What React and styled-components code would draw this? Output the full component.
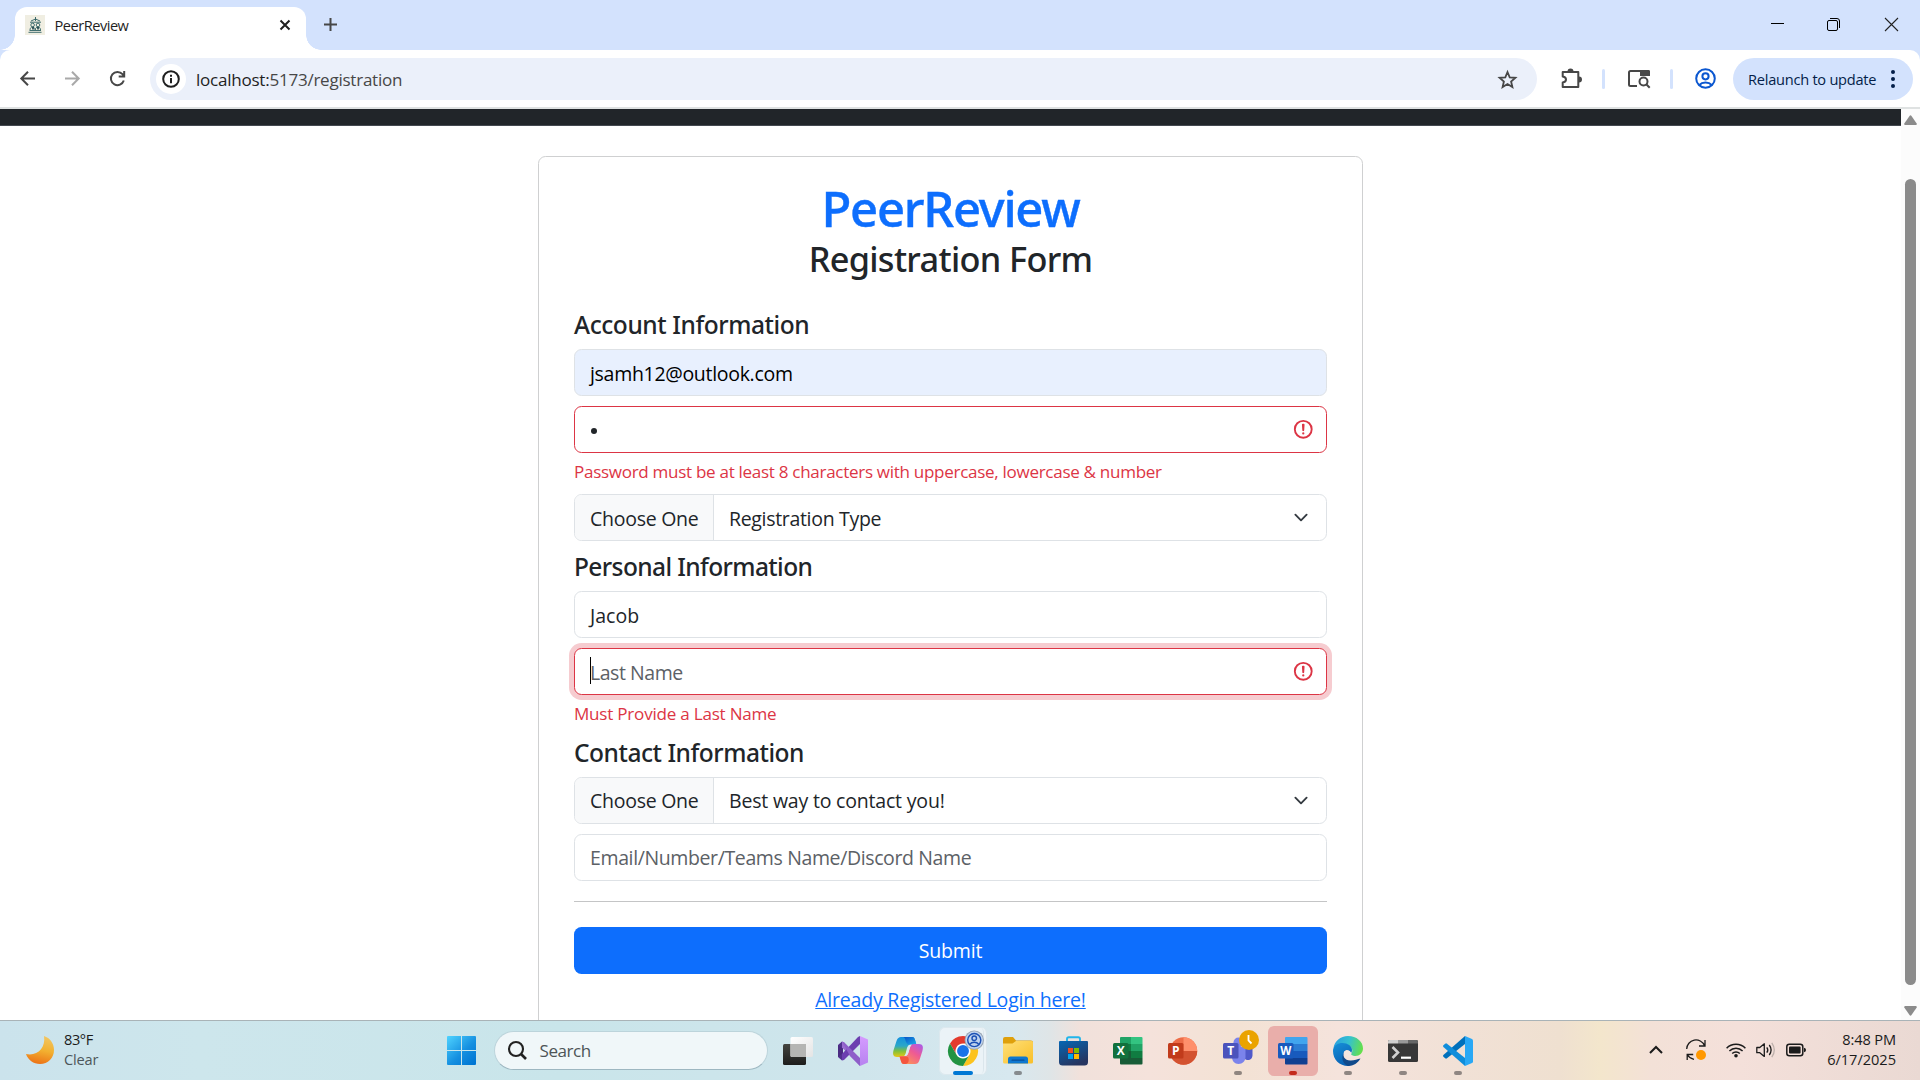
import React from "react";
import styled, { createGlobalStyle, css } from "styled-components";

const GlobalStyle = createGlobalStyle`
  * { box-sizing: border-box; }
  body { margin: 0; background: #fff; overflow: hidden; }
  h1, h2, h3, p { margin: 0; font-weight: inherit; }
  button, a { font: inherit; color: inherit; }
  svg { display: block; flex: none; overflow: visible; }
`;

const Screen = styled.div`
  width: 1920px;
  height: 1080px;
  display: flex;
  flex-direction: column;
  overflow: hidden;
  font-family: "Open Sans", "Noto Sans", sans-serif;
  color: #212529;
`;

const Text = styled.span`
  white-space: pre;
  letter-spacing: ${(p) => p.$track || 0}px;
  padding-top: ${(p) => (p.$drop || 0) * 2}px;
`;

/* ---------- Browser chrome ---------- */

const TabStrip = styled.header`
  flex: none;
  height: 50px;
  display: flex;
  align-items: flex-start;
  padding: 7px 22px 0 15px;
  background: #d3e2fd;
`;

const Tab = styled.div`
  position: relative;
  width: 291px;
  height: 43px;
  display: flex;
  align-items: center;
  padding: 0 16px 7px 10px;
  border-radius: 12px 12px 0 0;
  background: #fff;
  font-size: 14.6px;
  color: #1f1f1f;
  &::before,
  &::after {
    content: "";
    position: absolute;
    bottom: 0;
    width: 15px;
    height: 15px;
  }
  &::before {
    left: -15px;
    background: radial-gradient(circle at 0 0, transparent 14.5px, #fff 15px);
  }
  &::after {
    right: -15px;
    background: radial-gradient(circle at 100% 0, transparent 14.5px, #fff 15px);
  }
`;

const TabTitle = styled(Text)`
  flex: 1;
  margin-left: 9.5px;
`;

const NewTab = styled.div`
  margin: 11px auto 0 18px;
`;

const WindowControls = styled.div`
  display: grid;
  grid-template-columns: 56px 58px 13px;
  align-items: center;
  margin-top: 11px;
`;

const ToolbarWrap = styled.div`
  flex: none;
  height: 59px;
  background: #d3e2fd;
`;

const Toolbar = styled.div`
  height: 59px;
  display: flex;
  align-items: center;
  padding: 0 7px 0 20px;
  background: #fff;
  border-bottom: 2px solid #dfe2e2;
  border-radius: 10px 10px 0 0;
`;

const NavIcons = styled.div`
  display: flex;
  gap: 30px;
  margin-right: 25px;
`;

const Omnibox = styled.div`
  flex: none;
  width: 1387px;
  height: 42px;
  display: flex;
  align-items: center;
  margin-top: 1px;
  padding: 0 20px 0 6px;
  border-radius: 21px;
  background: #ebf0fa;
  font-size: 17.06px;
  color: #474747;
`;

const SiteInfo = styled.div`
  width: 30px;
  height: 30px;
  display: grid;
  place-items: center;
  margin-right: 10px;
  border-radius: 50%;
  background: #fff;
`;

const Url = styled(Text)`
  flex: 1;
  b {
    font-weight: 400;
    color: #1f1f1f;
  }
`;

const Actions = styled.div`
  flex: 1;
  display: flex;
  align-items: center;
  justify-content: space-between;
  padding: 0 17px 0 24px;
`;

const Separator = styled.div`
  width: 3px;
  height: 20px;
  margin-right: 2px;
  border-radius: 2px;
  background: #d3e2fd;
`;

const Relaunch = styled.button`
  flex: none;
  width: 180px;
  height: 42px;
  display: flex;
  align-items: center;
  justify-content: space-between;
  padding: 0 18px 0 15px;
  border: 0;
  border-radius: 21px;
  background: #d3e2fd;
  font-size: 14.6px;
  color: #041e49;
`;

/* ---------- Page ---------- */

const Viewport = styled.main`
  flex: none;
  height: 911px;
  display: flex;
  overflow: hidden;
`;

const Page = styled.div`
  flex: 1;
  display: flex;
  flex-direction: column;
  align-items: center;
  background: #fff;
`;

const Navbar = styled.div`
  flex: none;
  align-self: stretch;
  height: 17px;
  background: #212529;
  border-bottom: 1px solid #444950;
`;

const Card = styled.form`
  flex: none;
  width: 825px;
  height: 920px;
  margin-top: 30px;
  padding: 21px 35px;
  border: 1px solid #cfd0d1;
  border-radius: 7.5px;
  display: flex;
  flex-direction: column;
`;

const headingFont = css`
  font-family: "Noto Sans", "Open Sans", sans-serif;
  font-weight: 500;
`;

const Brand = styled.h1`
  ${headingFont}
  font-size: 49px;
  line-height: 60px;
  text-align: center;
  color: #0d6efd;
  -webkit-text-stroke: 0.4px #0d6efd;
`;

const Title = styled.h2`
  ${headingFont}
  font-size: 34.3px;
  line-height: 42px;
  text-align: center;
`;

const SectionTitle = styled.h3`
  ${headingFont}
  margin: ${(p) => p.$top}px 0 9px;
  font-size: 24.5px;
  line-height: 30px;
`;

const fieldColors = { normal: "#dee2e6", invalid: "#dc3545" };

const Field = styled.div`
  flex: none;
  height: 47px;
  display: flex;
  align-items: center;
  justify-content: space-between;
  margin-top: ${(p) => p.$top || 0}px;
  padding: 0 12px 0 15px;
  border: 1px solid ${(p) => (p.$invalid ? fieldColors.invalid : fieldColors.normal)};
  border-radius: 7.5px;
  background: ${(p) => (p.$autofill ? "#e8f0fe" : "#fff")};
  box-shadow: ${(p) => (p.$focus ? "0 0 0 5px rgba(220, 53, 69, 0.25)" : "none")};
  font-size: 19.5px;
  line-height: 30px;
  color: ${(p) => (p.$placeholder ? "#5c6166" : p.$autofill ? "#000" : "#212529")};
`;

const Dot = styled.i`
  width: 6px;
  height: 6px;
  margin: 3px 0 0 1px;
  border-radius: 50%;
  background: #212529;
`;

const Value = styled.div`
  display: flex;
  align-items: center;
  padding-top: 2px;
`;

const Caret = styled.i`
  width: 1px;
  height: 27px;
  margin: -4px -1px 0 0;
  background: #000;
`;

const Feedback = styled.p`
  margin-top: 6px;
  font-size: 17.06px;
  line-height: 26px;
  color: #dc3545;
`;

const Group = styled(Field)`
  padding: 0 15px 0 0;
`;

const Addon = styled.div`
  align-self: stretch;
  width: 139px;
  display: flex;
  align-items: center;
  padding-left: 15px;
  margin-right: 15px;
  border-right: 1px solid #dee2e6;
  border-radius: 6.5px 0 0 6.5px;
  background: #f8f9fa;
`;

const Selected = styled(Text)`
  flex: 1;
`;

const Divider = styled.div`
  flex: none;
  height: 1px;
  margin: 20px 0 25px;
  background: #c4c5c6;
`;

const Submit = styled.button`
  flex: none;
  height: 47px;
  border: 0;
  border-radius: 7.5px;
  background: #0d6efd;
  font-size: 19.5px;
  color: #fff;
`;

const LoginLink = styled.a`
  align-self: center;
  margin-top: 11px;
  font-size: 19.5px;
  line-height: 30px;
  color: #0d6efd;
  text-decoration: underline;
`;

const Scrollbar = styled.div`
  flex: none;
  width: 19px;
  display: flex;
  flex-direction: column;
  align-items: center;
  padding: 6px 0 4px;
  background: #fcfcfc;
`;

const Thumb = styled.div`
  width: 11px;
  height: 806px;
  margin: 54px 0 auto;
  border-radius: 6px;
  background: #8b8b8b;
`;

/* ---------- Taskbar ---------- */

const Taskbar = styled.footer`
  flex: none;
  height: 60px;
  display: flex;
  align-items: center;
  border-top: 1px solid #a9b3b7;
  background: linear-gradient(
    90deg,
    #cbe3ec 0,
    #cde6ec 200px,
    #c9e5ea 560px,
    #cfe5ec 860px,
    #d7e8ef 1010px,
    #dfe5e7 1050px,
    #f1e1db 1080px,
    #f5e2db 1150px,
    #f3e2d4 1240px,
    #f5e3dc 1340px,
    #f1e1d6 1460px,
    #efe0d0 1560px,
    #f3e6cc 1600px,
    #f3e1d7 1650px,
    #f4e0da 1740px,
    #ead9d3 1920px
  );
`;

const Weather = styled.div`
  width: 421px;
  display: flex;
  align-items: center;
  gap: 10px;
  padding: 0 0 2px 26px;
  font-size: 14.6px;
  line-height: 20px;
  color: #1b1b1b;
`;

const Lines = styled.div`
  display: flex;
  flex-direction: column;
  align-items: ${(p) => (p.$end ? "flex-end" : "flex-start")};
  padding-bottom: 2px;
`;

const Muted = styled(Text)`
  color: #4c565a;
`;

const StartSlot = styled.div`
  width: 73px;
  padding-left: 26px;
`;

const SearchBox = styled.div`
  width: 274px;
  height: 39px;
  display: flex;
  align-items: center;
  gap: 13.5px;
  padding: 0 14px 1px 13px;
  border: 1px solid #bcd4db;
  border-bottom-color: #9db7c1;
  border-radius: 20px;
  background: #f0f7f9;
  font-size: 17.06px;
  color: #4d5457;
`;

const Apps = styled.div`
  display: flex;
  margin-left: 2.5px;
`;

const Slot = styled.div`
  position: relative;
  width: 55px;
  height: 50px;
  display: grid;
  place-items: center;
  &::before {
    content: "";
    position: absolute;
    inset: ${(p) => (p.$bg === "word" ? "0 2.5px" : "1px 3.5px")};
    border-radius: 6px;
    background: ${(p) => ({ word: "#e9aeaa", active: "#ebf3f7" }[p.$bg] || "transparent")};
    ${(p) => p.$bg === "active" && "border: 1px solid #dce8ee; border-right: 4px double #dbe6ec;"}
  }
  &::after {
    content: "";
    position: absolute;
    bottom: 1px;
    left: calc(50% - ${(p) => (p.$bar === "#0078d4" ? 10 : 4)}px);
    width: ${(p) => (p.$bar === "#0078d4" ? 20 : 8)}px;
    height: 4px;
    border-radius: 2px;
    background: ${(p) => p.$bar || "transparent"};
  }
  svg {
    position: relative;
  }
`;

const Tray = styled.div`
  flex: 1;
  display: flex;
  align-items: center;
  justify-content: flex-end;
  gap: 10px;
  padding-bottom: 1px;
`;

const Clock = styled(Lines)`
  width: 104px;
  padding-right: 24px;
  font-size: 14.6px;
  line-height: 20px;
  color: #1b1b1b;
`;

const TrayIcon = styled.div`
  width: 20px;
  margin-right: ${(p) => p.$after || 0}px;
`;

/* ---------- Icons ---------- */

const Stroke = ({ w, h = w, box = `0 0 ${w} ${h}`, c = "#474747", s = 2, children }) => (
  <svg width={w} height={h} viewBox={box} fill="none" stroke={c} strokeWidth={s}>
    {children}
  </svg>
);

const Favicon = () => (
  <svg width="20" height="20" viewBox="0 0 20 20">
    <rect width="20" height="20" fill="#f0eee2" />
    <g fill="none" stroke="#2d5f61" strokeWidth=".9">
      <path d="M10.500 2v4M6 6l4.500-2L15 6M5 7.200h11" />
      <circle cx="7.600" cy="10" r="1.800" />
      <circle cx="13" cy="10" r="1.800" />
      <path d="M5 15c0-4 5-4 5.200 0 .3-4 5.300-4 5.300 0M3.500 17.300h13M4.500 15.500h11.500" />
    </g>
    <path d="M7.200 12h1.600v2.500H7.200zM12.200 12h1.600v2.500h-1.600z" fill="#173f46" />
  </svg>
);

const Danger = () => (
  <svg width="22.5" height="22.5" viewBox="0 0 12 12" fill="none" stroke="#dc3545">
    <circle cx="6" cy="6" r="4.5" />
    <path strokeLinejoin="round" d="M5.8 3.6h.4L6 6.5z" />
    <circle cx="6" cy="8.2" r=".6" fill="#dc3545" stroke="none" />
  </svg>
);

const Chevron = () => (
  <svg width="20" height="15" viewBox="0 0 16 16" fill="none" stroke="#343a40" strokeWidth="2" strokeLinecap="round" strokeLinejoin="round">
    <path d="m2 5 6 6 6-6" />
  </svg>
);

const Moon = () => (
  <svg width="28" height="28" viewBox="0 0 28 28">
    <defs>
      <linearGradient id="moon" x1=".6" y1="0" x2=".4" y2="1">
        <stop offset="0" stopColor="#f2c661" />
        <stop offset=".5" stopColor="#f2b030" />
        <stop offset="1" stopColor="#ec7216" />
      </linearGradient>
    </defs>
    <path d="M18 0C24 2 28 7.500 28 14c0 8-6 14-14 14C7.500 28 2 24 0 18c11 2.500 20-6 18-18Z" fill="url(#moon)" />
  </svg>
);

const WindowsLogo = () => (
  <svg width="29" height="29" viewBox="0 0 29 29">
    <defs>
      <linearGradient id="win" gradientUnits="userSpaceOnUse" x1="0" y1="0" x2="26" y2="28">
        <stop offset="0" stopColor="#4fd3ff" />
        <stop offset=".6" stopColor="#158fe0" />
        <stop offset="1" stopColor="#0076d3" />
      </linearGradient>
    </defs>
    <path fill="url(#win)" d="M1 0h13v14H0V1Q0 0 1 0ZM15 0h13q1 0 1 1v13H15ZM0 15h14v14H1q-1 0-1-1ZM15 15h14v13q0 1-1 1H15Z" />
  </svg>
);

const TaskView = () => (
  <svg width="30" height="28" viewBox="0 0 30 28">
    <defs>
      <linearGradient id="tvd" x2="0" y2="1"><stop stopColor="#444440" /><stop offset="1" stopColor="#1d1d1c" /></linearGradient>
      <linearGradient id="tvl" x2="1" y2="1"><stop stopColor="#fff" /><stop offset="1" stopColor="#e4e4e4" /></linearGradient>
    </defs>
    <rect x="0" y="7" width="23" height="21" rx="1.500" fill="url(#tvd)" />
    <rect x="7.500" y="0" width="22.500" height="20" rx="1.500" fill="url(#tvl)" />
    <path d="M7.500 7H23v13H9q-1.500 0-1.500-1.500Z" fill="#b5b5b3" />
  </svg>
);

const VisualStudio = () => (
  <svg width="30" height="30" viewBox="0 0 30 30">
    <defs><linearGradient id="vs" x2="0" y2="1"><stop stopColor="#d59bff" /><stop offset="1" stopColor="#b783f0" /></linearGradient></defs>
    <path d="M0 9 4 5.500 5 12v6l-1 6.500L0 21Z" fill="#52318f" />
    <path d="M0 21V9l5 4v4Z" fill="#4a2b82" />
    <path d="m4 5.500 2 .7L22 24v6L4 11.500Z" fill="#9a6dd0" />
    <path d="M4 24.500V18L20 1l2-1v8L6 24Z" fill="#6c3fb0" />
    <path d="m4 5.500 2 .7L22 22v8L12 20Z" fill="#8e5fc9" />
    <path d="m22 0 8 3.500v23L22 30Z" fill="url(#vs)" />
  </svg>
);

const Copilot = () => (
  <svg width="30" height="27" viewBox="0 0 30 27">
    <defs>
      <linearGradient id="cpa" x2="0" y2="1"><stop stopColor="#1390e0" /><stop offset=".45" stopColor="#2ba7c8" /><stop offset=".7" stopColor="#7fbf3c" /><stop offset="1" stopColor="#e8c814" /></linearGradient>
      <linearGradient id="cpb" x1="1" y1="0" x2=".2" y2="1"><stop stopColor="#a45cf0" /><stop offset=".45" stopColor="#ee5a94" /><stop offset="1" stopColor="#ff9a50" /></linearGradient>
      <linearGradient id="cpc" x2="1" y2="1"><stop stopColor="#0a4fc4" /><stop offset="1" stopColor="#19b0ee" /></linearGradient>
    </defs>
    <path d="M8 0h11c2 0 2.500 1 3.200 3.500L23.500 8H18c-2 0-2.800 1.200-3.500 3.500l-1.700 5.500c-.8 2-1.600 3-3.800 3H4C0 20-.5 17 .6 13L3.500 4C4.500 1 6 0 8 0Z" fill="url(#cpa)" />
    <path d="M10 0h9c2 0 2.500 1 3.200 3.500L23.500 8H17C14 8 13 5 12.500 3.500 12 1.500 11.500 0 10 0Z" fill="url(#cpc)" />
    <path d="M22 27H11c-2 0-2.500-1-3.200-3.500L6.500 19H12c2 0 2.800-1.200 3.500-3.500L17.200 10c.8-2 1.600-3 3.800-3h5c4 0 4.500 3 3.400 7l-2.900 9c-1 3-2.500 4-4.500 4Z" fill="url(#cpb)" />
    <path d="M6.500 19.500H13c3 0 3 3 2.500 5-.5 1.500-1.500 2.500-3 2.500H11c-2 0-2.500-1-3.200-3.500Z" fill="#f4553f" />
    <path d="M14 11c.8-2.500 2-3.500 4-3.500h1c-1.300.8-1.700 1.700-2.200 3.200l-1.500 5C14.500 18 13.500 19 12 19h-1c1-.6 1.300-1.500 1.800-3Z" fill="#d8e8ee" />
  </svg>
);

const Chrome = () => (
  <svg width="30" height="30" viewBox="0 0 48 48">
    <circle cx="24" cy="24" r="12" fill="#fff" />
    <path d="M3.200 12A24 24 0 0 1 44.800 12H24a12 12 0 0 0-10.400 18Z" fill="#e33b2e" />
    <path d="M44.800 12A24 24 0 0 1 24 48l10.400-18A12 12 0 0 0 24 12Z" fill="#fcc31e" />
    <path d="M24 48A24 24 0 0 1 3.200 12l10.400 18A12 12 0 0 0 34.400 30Z" fill="#229342" />
    <circle cx="24" cy="24" r="9.500" fill="#1a73e8" />
    <g transform="translate(42 6.500)">
      <circle r="15.500" fill="#97a3b2" />
      <circle r="14" fill="#bfd3ee" />
      <g fill="none" stroke="#1c51b5" strokeWidth="2.300">
        <circle r="10.500" />
        <circle cy="-3" r="3.600" />
        <path d="M-7.500 7c4-4.500 11-4.500 15 0" />
      </g>
    </g>
  </svg>
);

const Folder = () => (
  <svg width="30" height="27" viewBox="0 0 30 27">
    <defs><linearGradient id="fld" x2="1" y2="1"><stop stopColor="#ffe07a" /><stop offset="1" stopColor="#f9bf28" /></linearGradient></defs>
    <path d="M0 2q0-2 2-2h8l3 3.500h15q2 0 2 2V12H0Z" fill="#dfa00c" />
    <path d="M0 6.500h9.500L13 4h15.500q1.500 0 1.500 1.500V25q0 1.500-1.500 1.500h-27Q0 26.500 0 25Z" fill="url(#fld)" />
    <path d="M5 26.500V22q0-2.500 2.500-2.500h15Q25 19.500 25 22v4.500Z" fill="#0f78d0" />
    <rect x="8.500" y="22.500" width="13" height="1.300" rx=".6" fill="#0a4d97" />
  </svg>
);

const Store = () => (
  <svg width="29" height="30" viewBox="0 0 29 30">
    <defs><linearGradient id="st" x2=".5" y2="1"><stop stopColor="#0667b4" /><stop offset="1" stopColor="#263560" /></linearGradient></defs>
    <path d="M8 7V3q0-1.800 1.800-1.800h9.400Q21 1.200 21 3v4" fill="none" stroke="#22b5ea" strokeWidth="1.900" />
    <path d="M1 5h27q1 0 1 1v20q0 3.500-3.500 3.500h-22Q0 29.500 0 26V6q0-1 1-1Z" fill="url(#st)" />
    <path fill="#f25022" d="M9 12h5v5H9z" /><path fill="#7fba00" d="M15 12h5v5h-5z" />
    <path fill="#00a4ef" d="M9 18h5v5H9z" /><path fill="#ffb900" d="M15 18h5v5h-5z" />
  </svg>
);

const Letter = ({ x, y, children, size = 12 }) => (
  <text x={x} y={y} fill="#fff" fontFamily="Open Sans, sans-serif" fontWeight="700" fontSize={size} textAnchor="middle">{children}</text>
);

const Excel = () => (
  <svg width="30" height="28" viewBox="0 0 30 28">
    <path fill="#21a366" d="M7 1q0-1 1-1h10v7H7z" /><path fill="#33c481" d="M18 0h10.500q1 0 1 1v6H18z" />
    <path fill="#107c41" d="M7 7h11v7H7z" /><path fill="#21a366" d="M18 7h11.500v7H18z" />
    <path fill="#185c37" d="M7 14h11v13.500H8q-1 0-1-1z" /><path fill="#107c41" d="M18 14h11.500v7H18z" />
    <path fill="#185c37" d="M18 21h11.500v5.500q0 1-1 1H18z" />
    <rect y="6" width="15.500" height="15.500" rx="1.500" fill="#12713d" />
    <Letter x="7.700" y="18.200">X</Letter>
  </svg>
);

const PowerPoint = () => (
  <svg width="30" height="28" viewBox="0 0 30 28">
    <circle cx="15.500" cy="14" r="13.700" fill="#ed6c47" />
    <path d="M15.500.3A13.700 13.700 0 0 1 29.200 14H15.500Z" fill="#ff8f6b" />
    <path d="M1.800 14h27.400a13.700 13.700 0 0 1-27.400 0Z" fill="#d35230" />
    <rect y="6" width="15.500" height="15.500" rx="1.500" fill="#c13b1b" />
    <Letter x="7.700" y="18.200">P</Letter>
  </svg>
);

const Teams = () => (
  <svg width="30" height="28" viewBox="0 0 30 28">
    <circle cx="24" cy="6" r="3.500" fill="#5059c9" />
    <path d="M20 10h8.500q1 0 1 1v7c0 3-2 5-4.500 5s-5-2-5-5Z" fill="#5059c9" />
    <circle cx="15.500" cy="5.500" r="5" fill="#7b83eb" />
    <path d="M9 10h13.500v10c0 4-3 7-7 7s-6.500-3-6.500-7Z" fill="#7b83eb" />
    <rect y="6" width="15.500" height="15.500" rx="1.500" fill="#4b53bc" />
    <Letter x="7.700" y="18.200">T</Letter>
    <circle cx="26" cy="3" r="10" fill="#eaa300" />
    <path d="M25.500-2v5.500l3 3" fill="none" stroke="#fff" strokeWidth="1.800" />
  </svg>
);

const Word = () => (
  <svg width="30" height="28" viewBox="0 0 30 28">
    <path fill="#41a5ee" d="M7 1q0-1 1-1h20.500q1 0 1 1v6H7z" /><path fill="#2b7cd3" d="M7 7h22.500v7H7z" />
    <path fill="#185abd" d="M7 14h22.500v7H7z" /><path fill="#103f91" d="M7 21h22.500v5.500q0 1-1 1H8q-1 0-1-1z" />
    <rect y="6" width="15.500" height="15.500" rx="1.500" fill="#185abd" />
    <Letter x="7.700" y="18" size={11.5}>W</Letter>
  </svg>
);

const Edge = () => (
  <svg width="30" height="30" viewBox="0 0 30 30">
    <defs>
      <linearGradient id="ea" x1="0" y1=".3" x2="1" y2=".5"><stop stopColor="#2a9fe0" /><stop offset=".5" stopColor="#35c1cf" /><stop offset="1" stopColor="#65e04a" /></linearGradient>
      <linearGradient id="eb" x2=".4" y2="1"><stop stopColor="#1690d8" /><stop offset="1" stopColor="#0a62b5" /></linearGradient>
    </defs>
    <path d="M.5 12C1.500 5 7.500 0 15 0c8.500 0 15 5.500 15 12.500 0 4.500-3.500 7.500-7.500 7.500-3 0-5-1-4-2.500 2-3 .5-7-4-8.500C9 7.500 3.500 8.500.5 12Z" fill="url(#ea)" />
    <path d="M0 15C0 9.500 5 7 9.500 7c5 0 9.500 3 9.500 7 0 2-1 3-1 3-1-3-5-4-7-1-2.500 5 .5 11 7 13.500-1 .3-2 .5-3 .5C6.500 30 0 23.500 0 15Z" fill="url(#eb)" />
    <path d="M11 16c-2 4 1 9 7 8.500 3.500 0 6.500-1.500 9.500-2-2.500 4.500-7 7.500-12.500 7.500-5-2-7.500-8-4-14Z" fill="#114a8b" />
    <path d="M11 16c1.500-2.500 5-2.500 7 .5-1.500 2 .5 4 5 3.500-5 3-12 1-12-4Z" fill="#f4e6e0" />
  </svg>
);

const Terminal = () => (
  <svg width="30" height="22" viewBox="0 0 30 22">
    <rect width="30" height="22" rx="1.500" fill="#373737" />
    <path d="M1.500 0H10v3.500H0v-2Q0 0 1.500 0Z" fill="#cfcfcf" />
    <path d="M10 0h10v3.500H10z" fill="#999" /><path d="M20 0h8.500Q30 0 30 1.500v2H20z" fill="#666" />
    <path d="m4.500 7 5.500 5.500L4.500 18" fill="none" stroke="#cfcfcf" strokeWidth="2.600" />
    <path d="M13 17.700h10" stroke="#fff" strokeWidth="2.200" />
  </svg>
);

const VsCode = () => (
  <svg width="30" height="30" viewBox="0 0 30 30">
    <path d="M22 0v8L4 22.300q-1 .7-1.800 0L.4 20.700q-.8-.8 0-1.600Z" fill="#0070bb" />
    <path d="M22 30v-8L4 7.700Q3 7 2.200 7.700L.4 9.300q-.8.800 0 1.600Z" fill="#0f8ddb" />
    <path d="M22 0 29 3q1 .5 1 1.500v21q0 1-1 1.500l-7 3Z" fill="#29a8f5" />
  </svg>
);

const APPS = [
  { id: "taskview", Icon: TaskView },
  { id: "vs", Icon: VisualStudio },
  { id: "copilot", Icon: Copilot },
  { id: "chrome", Icon: Chrome, bg: "active", bar: "#0078d4" },
  { id: "files", Icon: Folder, bar: "#868b8e" },
  { id: "store", Icon: Store },
  { id: "excel", Icon: Excel },
  { id: "powerpoint", Icon: PowerPoint },
  { id: "teams", Icon: Teams, bar: "#8f857f" },
  { id: "word", Icon: Word, bg: "word", bar: "#c42b1c" },
  { id: "edge", Icon: Edge, bar: "#8f8682" },
  { id: "terminal", Icon: Terminal, bar: "#8f8682" },
  { id: "vscode", Icon: VsCode, bar: "#8f8682" },
];

function SelectGroup({ label, value, track, top, drop }) {
  return (
    <Group $top={top}>
      <Addon><Text $track={-0.26} $drop={drop}>{label}</Text></Addon>
      <Selected $track={track} $drop={drop}>{value}</Selected>
      <Chevron />
    </Group>
  );
}

function BrowserChrome() {
  return (
    <>
      <TabStrip>
        <Tab>
          <Favicon />
          <TabTitle $track={-0.49}>PeerReview</TabTitle>
          <Stroke w={10} c="#1f1f1f"><path d="m.5.500 9 9m0-9-9 9" /></Stroke>
        </Tab>
        <NewTab><Stroke w={13}><path d="M6.500 0v13M0 6.500h13" /></Stroke></NewTab>
        <WindowControls>
          <Stroke w={13} c="#000" s={1}><path d="M0 5.500h13" /></Stroke>
          <Stroke w={13} c="#000" s={1}>
            <path d="M.5 4q0-1.500 1.500-1.500h7q1.500 0 1.500 1.500v7q0 1.500-1.500 1.500H2q-1.500 0-1.500-1.500ZM3 .5h7Q12.500.500 12.500 3v7" />
          </Stroke>
          <Stroke w={13} c="#222" s={1.1}><path d="m0 0 13 13M13 0 0 13" /></Stroke>
        </WindowControls>
      </TabStrip>
      <ToolbarWrap>
        <Toolbar>
          <NavIcons>
            <Stroke w={15}><path d="M15 7.500H1.500M8 .7 1.300 7.500 8 14.300" /></Stroke>
            <Stroke w={15} c="#a9a9a9"><path d="M0 7.500h13.500M7 .7l6.700 6.800L7 14.300" /></Stroke>
            <Stroke w={15}><path d="M13.800 9.500A6.600 6.600 0 1 1 12.500 3.200L14 5M14.200 0v5.500H8.700" /></Stroke>
          </NavIcons>
          <Omnibox>
            <SiteInfo>
              <Stroke w={18} c="#1f1f1f"><circle cx="9" cy="9" r="7.800" /><path d="M9 8v5.200M9 4.800v1.900" /></Stroke>
            </SiteInfo>
            <Url $track={-0.25} $drop={0.5}><b>localhost:</b>5173/registration</Url>
            <Stroke w={19} s={1.8}><path d="m9.500 2 2.200 5.300 5.700.5-4.300 3.700 1.300 5.600-4.900-3-4.900 3 1.300-5.600L1.600 7.800l5.700-.5Z" /></Stroke>
          </Omnibox>
          <Actions>
            <Stroke w={21} h={21}>
              <path d="M1.700 4h15.600v15H1.700v-4.500q3.300-.5 3.300-3T1.700 8.500Z" strokeLinejoin="round" />
              <path d="M6.500 3.500a3 3 0 0 1 6 0ZM18 8.500a3 3 0 0 1 0 6Z" fill="#474747" stroke="none" />
            </Stroke>
            <Separator />
            <Stroke w={22} h={19}>
              <path d="M9 17H2.500Q1 17 1 15.500v-12Q1 2 2.500 2H20q1 0 1 1v3" />
              <path d="M12 1h8.500q1.500 0 1.500 1.500V7H12Z" fill="#474747" stroke="none" />
              <circle cx="15.500" cy="12.500" r="4" /><path d="m18.300 15.300 3.400 3.400" />
            </Stroke>
            <Separator />
            <Stroke w={21} c="#0b57d0">
              <circle cx="10.500" cy="10.500" r="9.300" /><circle cx="10.500" cy="8.300" r="3.100" />
              <path d="M4 17.200c3.500-3.600 9.500-3.600 13 0" />
            </Stroke>
          </Actions>
          <Relaunch>
            <Text $track={-0.25}>Relaunch to update</Text>
            <svg width="4" height="18" viewBox="0 0 4 18" fill="#041e49"><circle cx="2" cy="2" r="2" /><circle cx="2" cy="9" r="2" /><circle cx="2" cy="16" r="2" /></svg>
          </Relaunch>
        </Toolbar>
      </ToolbarWrap>
    </>
  );
}

function RegistrationForm() {
  return (
    <Card>
      <Brand><Text $track={-1.27}>PeerReview</Text></Brand>
      <Title><Text $track={-0.66}>Registration Form</Text></Title>
      <SectionTitle $top={30}><Text $track={-0.42}>Account Information</Text></SectionTitle>
      <Field $autofill><Text $track={-0.3} $drop={1}>jsamh12@outlook.com</Text></Field>
      <Field $top={10} $invalid><Dot /><Danger /></Field>
      <Feedback><Text $track={-0.3}>Password must be at least 8 characters with uppercase, lowercase &amp; number</Text></Feedback>
      <SelectGroup top={9} drop={1} label="Choose One" value="Registration Type" track={-0.32} />
      <SectionTitle $top={11}><Text $track={-0.6}>Personal Information</Text></SectionTitle>
      <Field><Text $track={0} $drop={1}>Jacob</Text></Field>
      <Field $top={10} $invalid $focus $placeholder>
        <Value><Caret /><Text $track={-0.45}>Last Name</Text></Value>
        <Danger />
      </Field>
      <Feedback><Text $track={-0.22}>Must Provide a Last Name</Text></Feedback>
      <SectionTitle $top={11}><Text $track={-0.46}>Contact Information</Text></SectionTitle>
      <SelectGroup label="Choose One" value="Best way to contact you!" track={-0.19} />
      <Field $top={10} $placeholder><Text $track={-0.38}>Email/Number/Teams Name/Discord Name</Text></Field>
      <Divider />
      <Submit type="button"><Text $track={-0.18}>Submit</Text></Submit>
      <LoginLink><Text $track={-0.21}>Already Registered Login here!</Text></LoginLink>
    </Card>
  );
}

function TaskbarRow() {
  return (
    <Taskbar>
      <Weather>
        <Moon />
        <Lines><Text $track={-0.43}>83°F</Text><Muted $track={-0.2}>Clear</Muted></Lines>
      </Weather>
      <StartSlot><WindowsLogo /></StartSlot>
      <SearchBox>
        <Stroke w={18} c="#222" s={2.1}><circle cx="8" cy="8" r="7" /><path d="m13 13 5 5" strokeWidth="2.600" /></Stroke>
        <Text $track={-0.46}>Search</Text>
      </SearchBox>
      <Apps>
        {APPS.map(({ id, Icon, bg, bar }) => (
          <Slot key={id} $bg={bg} $bar={bar}><Icon /></Slot>
        ))}
      </Apps>
      <Tray>
        <TrayIcon $after={10}><Stroke w={20} h={16} c="#1b1b1b"><path d="m4 11 6-6 6 6" /></Stroke></TrayIcon>
        <TrayIcon $after={10}>
          <Stroke w={20} c="#1b1b1b" s={1.3}>
            <path d="M.7 9A9.300 9.300 0 0 1 18.500 5.500M19 0v6h-6M8 19.300A9.300 9.300 0 0 1 1.500 15M1.200 20v-5.500h6" />
            <circle cx="15" cy="15" r="5" fill="#ff9800" stroke="none" />
          </Stroke>
        </TrayIcon>
        <TrayIcon>
          <Stroke w={20} h={16} c="#1b1b1b" s={1.5}>
            <path d="M.6 6.200a13.300 13.300 0 0 1 18.800 0M3.400 9a9.300 9.300 0 0 1 13.200 0M6.200 11.500a5.500 5.500 0 0 1 7.600 0" />
            <circle cx="10" cy="13.800" r="1.800" fill="#1b1b1b" stroke="none" />
          </Stroke>
        </TrayIcon>
        <TrayIcon>
          <Stroke w={20} h={16} c="#1b1b1b" s={1.3}>
            <path d="M.8 5.500h3L8.300 1.800v12.600L3.800 10.700h-3Z" strokeLinejoin="round" />
            <path d="M10.800 5.300q2 2.700 0 5.400M13.300 3q3.600 5 0 10" />
            <path d="M15.800.8q5 7.200 0 14.400" stroke="#bdb0ab" />
          </Stroke>
        </TrayIcon>
        <TrayIcon>
          <Stroke w={20} h={14} c="#1b1b1b" s={1.5}>
            <rect x=".8" y="1.300" width="16" height="11.400" rx="2.500" />
            <rect x="3" y="3.500" width="11.600" height="7" rx="1" fill="#1b1b1b" stroke="none" />
            <path d="M18 4.800q2 .5 2 2.200T18 9.200Z" fill="#1b1b1b" stroke="none" />
          </Stroke>
        </TrayIcon>
        <Clock $end><Text $track={-0.12}>8:48 PM</Text><Text $track={-0.03}>6/17/2025</Text></Clock>
      </Tray>
    </Taskbar>
  );
}

export default function App() {
  return (
    <Screen>
      <GlobalStyle />
      <BrowserChrome />
      <Viewport>
        <Page>
          <Navbar />
          <RegistrationForm />
        </Page>
        <Scrollbar>
          <svg width="13" height="10" viewBox="0 0 13 10"><path d="M5.500 1q1-1.300 2 0L12.700 8.500Q13 10 12 10H1Q0 10 .3 8.500Z" fill="#8b8b8b" /></svg>
          <Thumb />
          <svg width="13" height="10" viewBox="0 0 13 10"><path d="M5.500 9q1 1.300 2 0L12.700 1.500Q13 0 12 0H1Q0 0 .3 1.500Z" fill="#8b8b8b" /></svg>
        </Scrollbar>
      </Viewport>
      <TaskbarRow />
    </Screen>
  );
}
